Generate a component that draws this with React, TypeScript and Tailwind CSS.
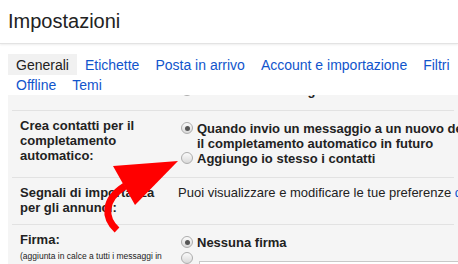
import type { ReactNode } from "react"

function Radio({ checked, children }: { checked?: boolean; children: ReactNode }) {
  return (
    <div className="flex items-start whitespace-nowrap">
      <span className="mt-[1px] mr-1 flex h-3 w-3 shrink-0 items-center justify-center rounded-full border border-[#adadad] bg-linear-to-b from-[#fbfbfb] to-[#d9d9d9]">
        {checked && <span className="h-[5px] w-[5px] rounded-full bg-[#555]" />}
      </span>
      <span className="font-bold">{children}</span>
    </div>
  )
}

const tabsTop = ["Generali", "Etichette", "Posta in arrivo", "Account e importazione", "Filtri"]
const tabsBottom = ["Offline", "Temi"]

export default function App() {
  return (
    <div className="relative h-[264px] w-[458px] overflow-hidden bg-white font-['Liberation_Sans',Arial,sans-serif] text-[#222]">
      <header className="h-[44px] border-b border-[#e3e3e3] pl-2 pt-[9px] text-[20px] leading-[24px] shadow-[0_1px_2px_rgba(0,0,0,0.07)]">
        Impostazioni
      </header>

      <nav className="pl-2 pt-[10px] text-[14px] leading-[20px]">
        <div className="flex h-[21px] whitespace-nowrap">
          {tabsTop.map((t, i) => (
            <span
              key={t}
              className={i === 0 ? "bg-[#f1f1f1] px-2 pt-[1px]" : "px-2 pt-[1px] text-[#15c]"}
            >
              {t}
            </span>
          ))}
        </div>
        <div className="flex h-[20px] whitespace-nowrap">
          {tabsBottom.map((t) => (
            <span key={t} className="px-2 text-[#15c]">
              {t}
            </span>
          ))}
        </div>
      </nav>

      <div className="ml-2 h-[169px] overflow-hidden bg-[#f5f5f5] text-[13px] leading-[15px]">
        {/* row scrolled under the tab bar, only its bottom edge shows */}
        <div className="mx-1 -mt-[22px] flex pl-2 pt-[7px] pb-[10px]">
          <div className="w-[161px] shrink-0" />
          <div className="mt-[3px] mb-[2px]">
            <Radio>Nascondi le immagini esterne</Radio>
          </div>
        </div>

        <div className="mx-1 flex border-t border-[#e2e2e2] pl-2 pt-[7px] pb-[9px]">
          <div className="w-[161px] shrink-0 font-bold">
            Crea contatti per il
            <br />
            completamento
            <br />
            automatico:
          </div>
          <div className="mt-[3px] mb-[2px]">
            <Radio checked>
              Quando invio un messaggio a un nuovo destinatario, aggiungilo ad Altri contatti per utilizzare
              <br />
              il completamento automatico in futuro
            </Radio>
            <Radio>Aggiungo io stesso i contatti</Radio>
          </div>
        </div>

        <div className="mx-1 flex border-t border-[#e2e2e2] pl-2 pt-[7px] pb-[9px]">
          <div className="w-[161px] shrink-0 font-bold">
            Segnali di importanza
            <br />
            per gli annunci:
          </div>
          <div className="-ml-[3px] whitespace-nowrap">
            Puoi visualizzare e modificare le tue preferenze <span className="text-[#15c]">qui</span>.
          </div>
        </div>

        <div className="mx-1 flex border-t border-[#e2e2e2] pl-2 pt-[7px] pb-[9px]">
          <div className="w-[161px] shrink-0">
            <div className="font-bold">Firma:</div>
            <div className="mt-[3px] whitespace-nowrap text-[8.5px] leading-[12px]">
              (aggiunta in calce a tutti i messaggi in
              <br />
              uscita)
            </div>
          </div>
          <div className="mt-[3px]">
            <Radio checked>Nessuna firma</Radio>
            <div className="flex items-start">
              <span className="mt-[2px] mr-1 h-3 w-3 shrink-0 rounded-full border border-[#adadad] bg-linear-to-b from-[#fbfbfb] to-[#d9d9d9]" />
              <span className="mt-[11px] ml-[2px] h-[60px] w-[300px] border border-[#c8c8c8] bg-white" />
            </div>
          </div>
        </div>
      </div>

      <svg
        className="pointer-events-none absolute left-0 top-0"
        width="458"
        height="264"
        viewBox="0 0 458 264"
      >
        <path d="M117 230 C104 218 103 200 125 186" fill="none" stroke="#ff0000" strokeWidth="7" />
        <polygon points="113,166 178,161 135,205" fill="#ff0000" />
      </svg>
    </div>
  )
}
